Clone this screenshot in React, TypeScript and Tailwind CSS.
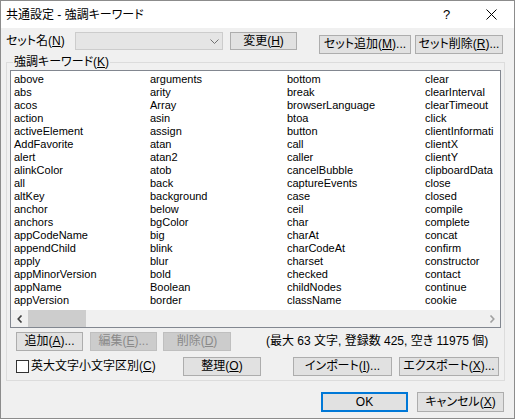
import React from "react";

const col1 = ["above","abs","acos","action","activeElement","AddFavorite","alert","alinkColor","all","altKey","anchor","anchors","appCodeName","appendChild","apply","appMinorVersion","appName","appVersion"];
const col2 = ["arguments","arity","Array","asin","assign","atan","atan2","atob","back","background","below","bgColor","big","blink","blur","bold","Boolean","border"];
const col3 = ["bottom","break","browserLanguage","btoa","button","call","caller","cancelBubble","captureEvents","case","ceil","char","charAt","charCodeAt","charset","checked","childNodes","className"];
const col4 = ["clear","clearInterval","clearTimeout","click","clientInformati","clientX","clientY","clipboardData","close","closed","compile","complete","concat","confirm","constructor","contact","continue","cookie"];

const btn = "flex items-center justify-center shrink-0 border border-[#adadad] bg-[#e1e1e1] text-[12px] leading-[13px] text-black";
const dis = "flex items-center justify-center shrink-0 border border-[#bfbfbf] bg-[#cccccc] text-[12px] leading-[13px] text-[#8a8a8a]";

function Col({ items, w }: { items: string[]; w: string }) {
  return (
    <div className={`flex flex-col shrink-0 ${w}`}>
      {items.map((t) => (
        <div key={t} className="h-[13px] leading-[13px] whitespace-nowrap">{t}</div>
      ))}
    </div>
  );
}

export default function App() {
  return (
    <div className="w-[515px] h-[420px] bg-white font-['Liberation_Sans','Noto_Sans_CJK_JP',sans-serif] [font-feature-settings:'palt'] text-black overflow-hidden">
      <div className="w-[515px] h-[419px] border border-[#8c8c8c] flex flex-col bg-[#f0f0f0]">
        {/* title bar */}
        <div className="h-[27px] bg-white flex items-center shrink-0">
          <div className="pl-[5px] text-[12px] leading-[14px]">共通設定 - 強調キーワード</div>
          <div className="ml-auto flex h-full">
            <div className="w-[45px] h-full flex items-center justify-center text-[13px]">?</div>
            <div className="w-[45px] h-full flex items-center justify-center">
              <svg width="11" height="11" viewBox="0 0 11 11">
                <path d="M0.5 0.5 L10.5 10.5 M10.5 0.5 L0.5 10.5" stroke="#000" strokeWidth="1" />
              </svg>
            </div>
          </div>
        </div>

        {/* body */}
        <div className="flex-1 flex flex-col">
          {/* row 1 */}
          <div className="mt-[4px] pl-[5px] flex items-start">
            <div className="w-[69px] h-[18px] flex items-center text-[12px] leading-[13px]">
              セット名(<u>N</u>)
            </div>
            <div className="w-[148px] h-[18px] border border-[#cccccc] bg-[#e5e5e5] flex items-center justify-end pr-[3px] shrink-0">
              <svg width="9" height="5" viewBox="0 0 9 5">
                <path d="M0.5 0.5 L4.5 4.5 L8.5 0.5" stroke="#707070" strokeWidth="1" fill="none" />
              </svg>
            </div>
            <div className={`${btn} ml-[7px] w-[67px] h-[18px]`}>変更(<u>H</u>)</div>
            <div className={`${btn} ml-[22px] mt-[3px] w-[92px] h-[19px]`}>セット追加(<u>M</u>)...</div>
            <div className={`${btn} ml-[4px] mt-[3px] w-[88px] h-[19px]`}>セット削除(<u>R</u>)...</div>
          </div>

          {/* group */}
          <div className="mt-[8px] ml-[5px] w-[499px] h-[319px] border border-[#dcdcdc] relative flex flex-col px-[3px] pt-[7px]">
            <div className="absolute left-[6px] -top-[7px] px-[1px] bg-[#f0f0f0] text-[12px] leading-[13px]">
              強調キーワード(<u>K</u>)
            </div>

            {/* list */}
            <div className="w-[491px] h-[258px] border border-[#828790] bg-white flex flex-col">
              <div className="h-[239px] overflow-hidden flex pt-[2px] pl-[3px] text-[11px] font-['Liberation_Sans',sans-serif]">
                <Col items={col1} w="w-[136px]" />
                <Col items={col2} w="w-[137px]" />
                <Col items={col3} w="w-[138px]" />
                <Col items={col4} w="w-[74px]" />
              </div>
              <div className="h-[17px] bg-[#f0f0f0] flex shrink-0">
                <div className="w-[17px] h-full flex items-center justify-center">
                  <svg width="6" height="8" viewBox="0 0 6 8">
                    <path d="M4.5 0.5 L1.2 4 L4.5 7.5" stroke="#404040" strokeWidth="1.6" fill="none" />
                  </svg>
                </div>
                <div className="w-[58px] h-full bg-[#cdcdcd]" />
                <div className="flex-1" />
                <div className="w-[17px] h-full flex items-center justify-center">
                  <svg width="6" height="8" viewBox="0 0 6 8">
                    <path d="M1.5 0.5 L4.8 4 L1.5 7.5" stroke="#a0a0a0" strokeWidth="1.6" fill="none" />
                  </svg>
                </div>
              </div>
            </div>

            {/* buttons row */}
            <div className="mt-[4px] ml-[6px] flex items-center">
              <div className={`${btn} w-[67px] h-[19px]`}>追加(<u>A</u>)...</div>
              <div className={`${dis} ml-[7px] w-[67px] h-[19px]`}>編集(<u>E</u>)...</div>
              <div className={`${dis} ml-[6px] w-[68px] h-[19px]`}>削除(<u>D</u>)</div>
              <div className="ml-[35px] h-[19px] flex items-center text-[12px] leading-[13px] whitespace-nowrap">
                (最大 63 文字, 登録数 425, 空き 11975 個)
              </div>
            </div>

            {/* checkbox row */}
            <div className="mt-[6px] ml-[6px] flex items-center h-[19px]">
              <div className="w-[167px] flex items-center shrink-0">
                <div className="w-[13px] h-[13px] border border-[#333333] bg-white shrink-0" />
                <div className="ml-[2px] text-[12px] leading-[13px] whitespace-nowrap">英大文字小文字区別(<u>C</u>)</div>
              </div>
              <div className={`${btn} w-[78px] h-[19px]`}>整理(<u>O</u>)</div>
              <div className={`${btn} ml-[32px] w-[99px] h-[19px]`}>インポート(<u>I</u>)...</div>
              <div className={`${btn} ml-[7px] w-[100px] h-[19px]`}>エクスポート(<u>X</u>)...</div>
            </div>
          </div>

          {/* OK / Cancel */}
          <div className="mt-[11px] pr-[10px] flex justify-end">
            <div className="w-[87px] h-[20px] border-2 border-[#0078d7] bg-[#e1e1e1] flex items-center justify-center text-[12px] leading-[13px]">OK</div>
            <div className={`${btn} ml-[9px] w-[87px] h-[20px]`}>キャンセル(<u>X</u>)</div>
          </div>
        </div>
      </div>
    </div>
  );
}
